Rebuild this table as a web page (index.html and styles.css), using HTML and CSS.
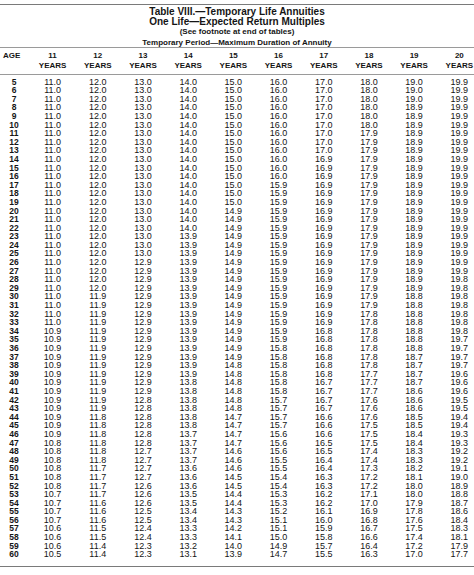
FILE: index.html
```html
<!DOCTYPE html>
<html lang="en">
<head>
<meta charset="utf-8">
<title>Table VIII — Temporary Life Annuities</title>
<link rel="stylesheet" href="styles.css">
</head>
<body>
<div class="sheet">
  <header class="title">
    <div class="t1">Table VIII.—Temporary Life Annuities</div>
    <div class="t1">One Life—Expected Return Multiples</div>
    <div class="t3">(See footnote at end of tables)</div>
    <div class="t4">Temporary Period—Maximum Duration of Annuity</div>
  </header>
  <table class="grid">
    <colgroup>
      <col class="c-age">
      <col class="c-yr"><col class="c-yr"><col class="c-yr"><col class="c-yr"><col class="c-yr">
      <col class="c-yr"><col class="c-yr"><col class="c-yr"><col class="c-yr"><col class="c-yr">
    </colgroup>
    <thead>
      <tr>
        <th class="age">AGE</th>
        <th>11<br>YEARS</th><th>12<br>YEARS</th><th>13<br>YEARS</th><th>14<br>YEARS</th><th>15<br>YEARS</th>
        <th>16<br>YEARS</th><th>17<br>YEARS</th><th>18<br>YEARS</th><th>19<br>YEARS</th><th>20<br>YEARS</th>
      </tr>
    </thead>
    <tbody>
      <tr><th>5</th><td>11.0</td><td>12.0</td><td>13.0</td><td>14.0</td><td>15.0</td><td>16.0</td><td>17.0</td><td>18.0</td><td>19.0</td><td>19.9</td></tr>
      <tr><th>6</th><td>11.0</td><td>12.0</td><td>13.0</td><td>14.0</td><td>15.0</td><td>16.0</td><td>17.0</td><td>18.0</td><td>19.0</td><td>19.9</td></tr>
      <tr><th>7</th><td>11.0</td><td>12.0</td><td>13.0</td><td>14.0</td><td>15.0</td><td>16.0</td><td>17.0</td><td>18.0</td><td>19.0</td><td>19.9</td></tr>
      <tr><th>8</th><td>11.0</td><td>12.0</td><td>13.0</td><td>14.0</td><td>15.0</td><td>16.0</td><td>17.0</td><td>18.0</td><td>18.9</td><td>19.9</td></tr>
      <tr><th>9</th><td>11.0</td><td>12.0</td><td>13.0</td><td>14.0</td><td>15.0</td><td>16.0</td><td>17.0</td><td>18.0</td><td>18.9</td><td>19.9</td></tr>
      <tr><th>10</th><td>11.0</td><td>12.0</td><td>13.0</td><td>14.0</td><td>15.0</td><td>16.0</td><td>17.0</td><td>18.0</td><td>18.9</td><td>19.9</td></tr>
      <tr><th>11</th><td>11.0</td><td>12.0</td><td>13.0</td><td>14.0</td><td>15.0</td><td>16.0</td><td>17.0</td><td>17.9</td><td>18.9</td><td>19.9</td></tr>
      <tr><th>12</th><td>11.0</td><td>12.0</td><td>13.0</td><td>14.0</td><td>15.0</td><td>16.0</td><td>17.0</td><td>17.9</td><td>18.9</td><td>19.9</td></tr>
      <tr><th>13</th><td>11.0</td><td>12.0</td><td>13.0</td><td>14.0</td><td>15.0</td><td>16.0</td><td>17.0</td><td>17.9</td><td>18.9</td><td>19.9</td></tr>
      <tr><th>14</th><td>11.0</td><td>12.0</td><td>13.0</td><td>14.0</td><td>15.0</td><td>16.0</td><td>16.9</td><td>17.9</td><td>18.9</td><td>19.9</td></tr>
      <tr><th>15</th><td>11.0</td><td>12.0</td><td>13.0</td><td>14.0</td><td>15.0</td><td>16.0</td><td>16.9</td><td>17.9</td><td>18.9</td><td>19.9</td></tr>
      <tr><th>16</th><td>11.0</td><td>12.0</td><td>13.0</td><td>14.0</td><td>15.0</td><td>16.0</td><td>16.9</td><td>17.9</td><td>18.9</td><td>19.9</td></tr>
      <tr><th>17</th><td>11.0</td><td>12.0</td><td>13.0</td><td>14.0</td><td>15.0</td><td>15.9</td><td>16.9</td><td>17.9</td><td>18.9</td><td>19.9</td></tr>
      <tr><th>18</th><td>11.0</td><td>12.0</td><td>13.0</td><td>14.0</td><td>15.0</td><td>15.9</td><td>16.9</td><td>17.9</td><td>18.9</td><td>19.9</td></tr>
      <tr><th>19</th><td>11.0</td><td>12.0</td><td>13.0</td><td>14.0</td><td>15.0</td><td>15.9</td><td>16.9</td><td>17.9</td><td>18.9</td><td>19.9</td></tr>
      <tr><th>20</th><td>11.0</td><td>12.0</td><td>13.0</td><td>14.0</td><td>14.9</td><td>15.9</td><td>16.9</td><td>17.9</td><td>18.9</td><td>19.9</td></tr>
      <tr><th>21</th><td>11.0</td><td>12.0</td><td>13.0</td><td>14.0</td><td>14.9</td><td>15.9</td><td>16.9</td><td>17.9</td><td>18.9</td><td>19.9</td></tr>
      <tr><th>22</th><td>11.0</td><td>12.0</td><td>13.0</td><td>14.0</td><td>14.9</td><td>15.9</td><td>16.9</td><td>17.9</td><td>18.9</td><td>19.9</td></tr>
      <tr><th>23</th><td>11.0</td><td>12.0</td><td>13.0</td><td>13.9</td><td>14.9</td><td>15.9</td><td>16.9</td><td>17.9</td><td>18.9</td><td>19.9</td></tr>
      <tr><th>24</th><td>11.0</td><td>12.0</td><td>13.0</td><td>13.9</td><td>14.9</td><td>15.9</td><td>16.9</td><td>17.9</td><td>18.9</td><td>19.9</td></tr>
      <tr><th>25</th><td>11.0</td><td>12.0</td><td>13.0</td><td>13.9</td><td>14.9</td><td>15.9</td><td>16.9</td><td>17.9</td><td>18.9</td><td>19.9</td></tr>
      <tr><th>26</th><td>11.0</td><td>12.0</td><td>12.9</td><td>13.9</td><td>14.9</td><td>15.9</td><td>16.9</td><td>17.9</td><td>18.9</td><td>19.9</td></tr>
      <tr><th>27</th><td>11.0</td><td>12.0</td><td>12.9</td><td>13.9</td><td>14.9</td><td>15.9</td><td>16.9</td><td>17.9</td><td>18.9</td><td>19.9</td></tr>
      <tr><th>28</th><td>11.0</td><td>12.0</td><td>12.9</td><td>13.9</td><td>14.9</td><td>15.9</td><td>16.9</td><td>17.9</td><td>18.9</td><td>19.8</td></tr>
      <tr><th>29</th><td>11.0</td><td>12.0</td><td>12.9</td><td>13.9</td><td>14.9</td><td>15.9</td><td>16.9</td><td>17.9</td><td>18.9</td><td>19.8</td></tr>
      <tr><th>30</th><td>11.0</td><td>11.9</td><td>12.9</td><td>13.9</td><td>14.9</td><td>15.9</td><td>16.9</td><td>17.9</td><td>18.8</td><td>19.8</td></tr>
      <tr><th>31</th><td>11.0</td><td>11.9</td><td>12.9</td><td>13.9</td><td>14.9</td><td>15.9</td><td>16.9</td><td>17.9</td><td>18.8</td><td>19.8</td></tr>
      <tr><th>32</th><td>11.0</td><td>11.9</td><td>12.9</td><td>13.9</td><td>14.9</td><td>15.9</td><td>16.9</td><td>17.8</td><td>18.8</td><td>19.8</td></tr>
      <tr><th>33</th><td>11.0</td><td>11.9</td><td>12.9</td><td>13.9</td><td>14.9</td><td>15.9</td><td>16.9</td><td>17.8</td><td>18.8</td><td>19.8</td></tr>
      <tr><th>34</th><td>10.9</td><td>11.9</td><td>12.9</td><td>13.9</td><td>14.9</td><td>15.9</td><td>16.8</td><td>17.8</td><td>18.8</td><td>19.8</td></tr>
      <tr><th>35</th><td>10.9</td><td>11.9</td><td>12.9</td><td>13.9</td><td>14.9</td><td>15.9</td><td>16.8</td><td>17.8</td><td>18.8</td><td>19.7</td></tr>
      <tr><th>36</th><td>10.9</td><td>11.9</td><td>12.9</td><td>13.9</td><td>14.9</td><td>15.8</td><td>16.8</td><td>17.8</td><td>18.8</td><td>19.7</td></tr>
      <tr><th>37</th><td>10.9</td><td>11.9</td><td>12.9</td><td>13.9</td><td>14.9</td><td>15.8</td><td>16.8</td><td>17.8</td><td>18.7</td><td>19.7</td></tr>
      <tr><th>38</th><td>10.9</td><td>11.9</td><td>12.9</td><td>13.9</td><td>14.8</td><td>15.8</td><td>16.8</td><td>17.8</td><td>18.7</td><td>19.7</td></tr>
      <tr><th>39</th><td>10.9</td><td>11.9</td><td>12.9</td><td>13.9</td><td>14.8</td><td>15.8</td><td>16.8</td><td>17.7</td><td>18.7</td><td>19.6</td></tr>
      <tr><th>40</th><td>10.9</td><td>11.9</td><td>12.9</td><td>13.8</td><td>14.8</td><td>15.8</td><td>16.7</td><td>17.7</td><td>18.7</td><td>19.6</td></tr>
      <tr><th>41</th><td>10.9</td><td>11.9</td><td>12.9</td><td>13.8</td><td>14.8</td><td>15.8</td><td>16.7</td><td>17.7</td><td>18.6</td><td>19.6</td></tr>
      <tr><th>42</th><td>10.9</td><td>11.9</td><td>12.8</td><td>13.8</td><td>14.8</td><td>15.7</td><td>16.7</td><td>17.6</td><td>18.6</td><td>19.5</td></tr>
      <tr><th>43</th><td>10.9</td><td>11.9</td><td>12.8</td><td>13.8</td><td>14.8</td><td>15.7</td><td>16.7</td><td>17.6</td><td>18.6</td><td>19.5</td></tr>
      <tr><th>44</th><td>10.9</td><td>11.8</td><td>12.8</td><td>13.8</td><td>14.7</td><td>15.7</td><td>16.6</td><td>17.6</td><td>18.5</td><td>19.4</td></tr>
      <tr><th>45</th><td>10.9</td><td>11.8</td><td>12.8</td><td>13.8</td><td>14.7</td><td>15.7</td><td>16.6</td><td>17.5</td><td>18.5</td><td>19.4</td></tr>
      <tr><th>46</th><td>10.9</td><td>11.8</td><td>12.8</td><td>13.7</td><td>14.7</td><td>15.6</td><td>16.6</td><td>17.5</td><td>18.4</td><td>19.3</td></tr>
      <tr><th>47</th><td>10.8</td><td>11.8</td><td>12.8</td><td>13.7</td><td>14.7</td><td>15.6</td><td>16.5</td><td>17.5</td><td>18.4</td><td>19.3</td></tr>
      <tr><th>48</th><td>10.8</td><td>11.8</td><td>12.7</td><td>13.7</td><td>14.6</td><td>15.6</td><td>16.5</td><td>17.4</td><td>18.3</td><td>19.2</td></tr>
      <tr><th>49</th><td>10.8</td><td>11.8</td><td>12.7</td><td>13.7</td><td>14.6</td><td>15.5</td><td>16.4</td><td>17.4</td><td>18.3</td><td>19.2</td></tr>
      <tr><th>50</th><td>10.8</td><td>11.7</td><td>12.7</td><td>13.6</td><td>14.6</td><td>15.5</td><td>16.4</td><td>17.3</td><td>18.2</td><td>19.1</td></tr>
      <tr><th>51</th><td>10.8</td><td>11.7</td><td>12.7</td><td>13.6</td><td>14.5</td><td>15.4</td><td>16.3</td><td>17.2</td><td>18.1</td><td>19.0</td></tr>
      <tr><th>52</th><td>10.8</td><td>11.7</td><td>12.6</td><td>13.6</td><td>14.5</td><td>15.4</td><td>16.3</td><td>17.2</td><td>18.0</td><td>18.9</td></tr>
      <tr><th>53</th><td>10.7</td><td>11.7</td><td>12.6</td><td>13.5</td><td>14.4</td><td>15.3</td><td>16.2</td><td>17.1</td><td>18.0</td><td>18.8</td></tr>
      <tr><th>54</th><td>10.7</td><td>11.6</td><td>12.6</td><td>13.5</td><td>14.4</td><td>15.3</td><td>16.2</td><td>17.0</td><td>17.9</td><td>18.7</td></tr>
      <tr><th>55</th><td>10.7</td><td>11.6</td><td>12.5</td><td>13.4</td><td>14.3</td><td>15.2</td><td>16.1</td><td>16.9</td><td>17.8</td><td>18.6</td></tr>
      <tr><th>56</th><td>10.7</td><td>11.6</td><td>12.5</td><td>13.4</td><td>14.3</td><td>15.1</td><td>16.0</td><td>16.8</td><td>17.6</td><td>18.4</td></tr>
      <tr><th>57</th><td>10.6</td><td>11.5</td><td>12.4</td><td>13.3</td><td>14.2</td><td>15.1</td><td>15.9</td><td>16.7</td><td>17.5</td><td>18.3</td></tr>
      <tr><th>58</th><td>10.6</td><td>11.5</td><td>12.4</td><td>13.3</td><td>14.1</td><td>15.0</td><td>15.8</td><td>16.6</td><td>17.4</td><td>18.1</td></tr>
      <tr><th>59</th><td>10.6</td><td>11.4</td><td>12.3</td><td>13.2</td><td>14.0</td><td>14.9</td><td>15.7</td><td>16.4</td><td>17.2</td><td>17.9</td></tr>
      <tr><th>60</th><td>10.5</td><td>11.4</td><td>12.3</td><td>13.1</td><td>13.9</td><td>14.7</td><td>15.5</td><td>16.3</td><td>17.0</td><td>17.7</td></tr>
    </tbody>
  </table>
</div>
</body>
</html>
```
FILE: styles.css
```css
* { box-sizing: border-box; }

html, body {
  margin: 0;
  padding: 0;
  background: #ffffff;
}

body {
  font-family: "Liberation Sans", Arial, Helvetica, sans-serif;
  color: #151515;
  overflow: hidden;
}

.sheet {
  margin-top: 4px;
  width: 474px;
  border-top: 1px solid #7a7a7a;
  overflow: hidden;
}

.title {
  text-align: center;
  font-weight: bold;
  padding-top: 2px;
  border-bottom: 1px solid #9a9a9a;
}

.t1 {
  font-size: 10px;
  line-height: 10px;
}

.t3 {
  font-size: 8px;
  line-height: 10.5px;
}

.t4 {
  font-size: 8px;
  line-height: 9.5px;
}

.grid {
  border-collapse: separate;
  border-spacing: 0;
  table-layout: fixed;
  width: 482px;
}

.c-age { width: 30px; }
.c-yr { width: 45.2px; }

.grid thead th {
  font-size: 8px;
  line-height: 9.5px;
  font-weight: bold;
  text-align: center;
  vertical-align: top;
  padding: 3px 0 4px;
  border-bottom: 1px solid #9a9a9a;
}

.grid thead th.age {
  text-align: left;
  padding-left: 3px;
}

.grid tbody th,
.grid tbody td {
  line-height: 8.6px;
  height: 8.6px;
  padding: 0;
  text-align: center;
  white-space: nowrap;
}

.grid tbody th {
  font-size: 8.5px;
  font-weight: bold;
  padding-right: 2px;
}

.grid tbody td {
  font-size: 9px;
  font-weight: normal;
}

.grid tbody tr:first-child > * {
  padding-top: 2.6px;
  height: 11.2px;
}

.grid tbody tr:last-child > * {
  padding-bottom: 6.8px;
  height: 16.4px;
  border-bottom: 1px solid #7a7a7a;
}
```
